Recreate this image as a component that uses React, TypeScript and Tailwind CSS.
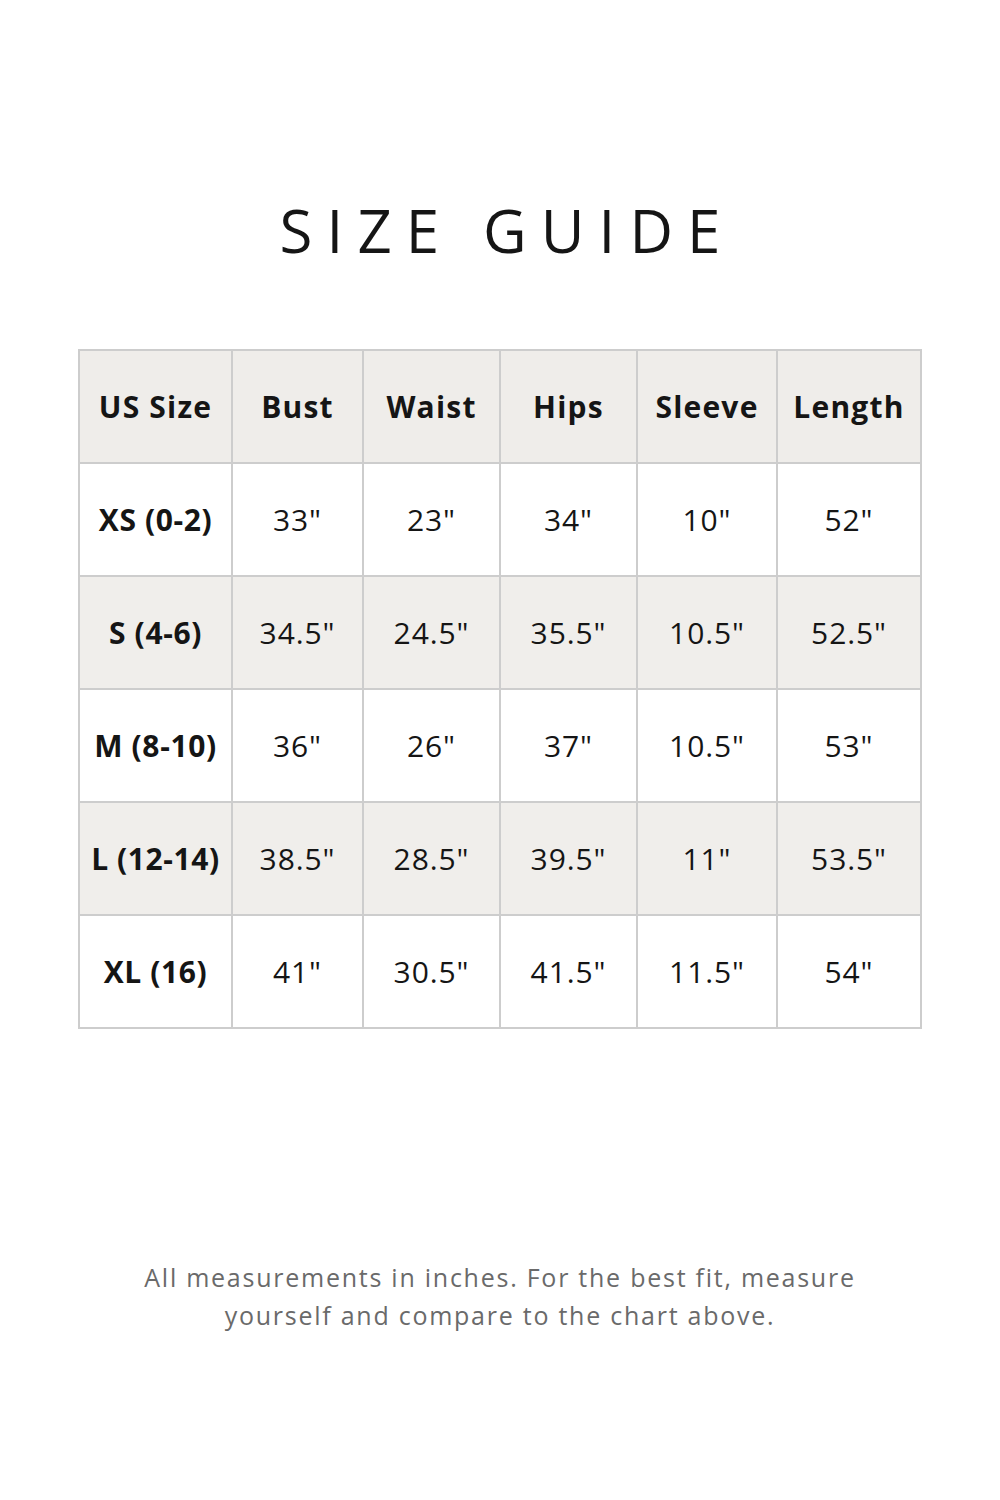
const columns = ['US Size', 'Bust', 'Waist', 'Hips', 'Sleeve', 'Length'];

const rows = [
  ['XS (0-2)', '33"', '23"', '34"', '10"', '52"'],
  ['S (4-6)', '34.5"', '24.5"', '35.5"', '10.5"', '52.5"'],
  ['M (8-10)', '36"', '26"', '37"', '10.5"', '53"'],
  ['L (12-14)', '38.5"', '28.5"', '39.5"', '11"', '53.5"'],
  ['XL (16)', '41"', '30.5"', '41.5"', '11.5"', '54"'],
];

const widths = ['w-[153px]', 'w-[131px]', 'w-[137px]', 'w-[137px]', 'w-[140px]', 'w-[144px]'];

export default function App() {
  return (
    <div className="w-[1000px] h-[1500px] bg-white flex flex-col items-center font-['Open_Sans',sans-serif] text-[#151515]">
      <h1 className="mt-[196px] text-[60px] leading-[68px] font-normal tracking-[0.235em] pl-[0.235em]">
        SIZE GUIDE
      </h1>

      <table className="mt-[85px] table-fixed border-collapse border-2 border-[#cdcdcd]">
        <colgroup>
          {widths.map((w, i) => (
            <col key={i} className={w} />
          ))}
        </colgroup>
        <thead>
          <tr className="bg-[#efedea] h-[113px]">
            {columns.map((c) => (
              <th
                key={c}
                className="border-2 border-[#cdcdcd] text-[30px] font-bold tracking-[0.04em] text-center whitespace-nowrap"
              >
                {c}
              </th>
            ))}
          </tr>
        </thead>
        <tbody>
          {rows.map((r, i) => (
            <tr key={r[0]} className={`h-[113px] ${i % 2 === 1 ? 'bg-[#f0eeeb]' : 'bg-white'}`}>
              {r.map((v, j) => (
                <td
                  key={j}
                  className={`border-2 border-[#cdcdcd] text-[30px] text-center whitespace-nowrap ${
                    j === 0 ? 'font-bold tracking-[0.02em]' : 'font-normal tracking-[0.03em]'
                  }`}
                >
                  {v}
                </td>
              ))}
            </tr>
          ))}
        </tbody>
      </table>

      <p className="mt-[229px] w-[760px] text-center text-[25px] leading-[38px] tracking-[0.07em] text-[#6a6a6a]">
        All measurements in inches. For the best fit, measure yourself and compare to the chart above.
      </p>
    </div>
  );
}
